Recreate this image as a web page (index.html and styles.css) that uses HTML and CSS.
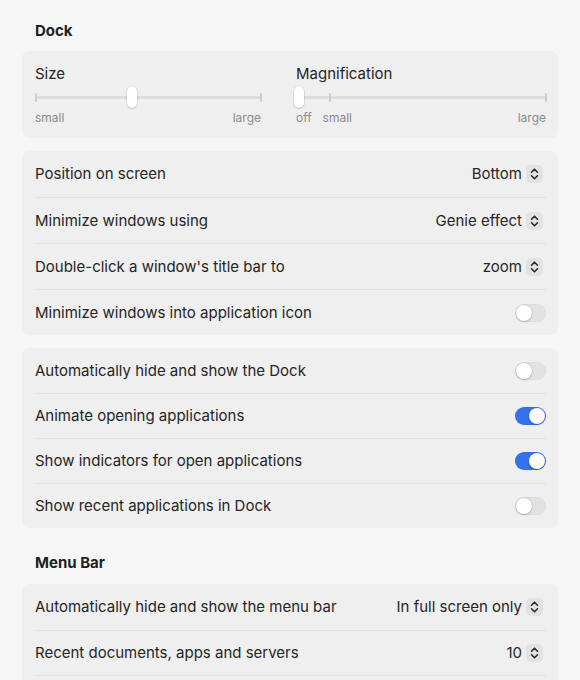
FILE: index.html
```html
<!DOCTYPE html>
<html lang="en">
<head>
<meta charset="utf-8">
<title>Desktop &amp; Dock</title>
<link rel="stylesheet" href="styles.css">
</head>
<body>
<div class="pane">
  <h2 class="section-title">Dock</h2>

  <div class="card sliders">
    <div class="slider-group size-group">
      <div class="slider-label">Size</div>
      <div class="slider">
        <div class="track"></div>
        <span class="tick" style="left:0%"></span>
        <span class="tick" style="left:100%"></span>
        <span class="thumb" style="left:43%"></span>
      </div>
      <div class="scale">
        <span>small</span>
        <span class="push">large</span>
      </div>
    </div>
    <div class="slider-group mag-group">
      <div class="slider-label">Magnification</div>
      <div class="slider">
        <div class="track"></div>
        <span class="tick" style="left:0%"></span>
        <span class="tick" style="left:13.6%"></span>
        <span class="tick" style="left:100%"></span>
        <span class="thumb" style="left:1%"></span>
      </div>
      <div class="scale">
        <span>off</span>
        <span class="gap-small">small</span>
        <span class="push">large</span>
      </div>
    </div>
  </div>

  <div class="card list tall">
    <div class="row">
      <span class="row-label">Position on screen</span>
      <span class="popup">Bottom<span class="stepper"><svg viewBox="0 0 17 18" width="17" height="18"><path d="M5.5 7.2 8.5 4.2 11.5 7.2M5.5 10.8 8.5 13.8 11.5 10.8"/></svg></span></span>
    </div>
    <div class="row">
      <span class="row-label">Minimize windows using</span>
      <span class="popup">Genie effect<span class="stepper"><svg viewBox="0 0 17 18" width="17" height="18"><path d="M5.5 7.2 8.5 4.2 11.5 7.2M5.5 10.8 8.5 13.8 11.5 10.8"/></svg></span></span>
    </div>
    <div class="row">
      <span class="row-label">Double-click a window's title bar to</span>
      <span class="popup">zoom<span class="stepper"><svg viewBox="0 0 17 18" width="17" height="18"><path d="M5.5 7.2 8.5 4.2 11.5 7.2M5.5 10.8 8.5 13.8 11.5 10.8"/></svg></span></span>
    </div>
    <div class="row">
      <span class="row-label">Minimize windows into application icon</span>
      <span class="toggle"></span>
    </div>
  </div>

  <div class="card list">
    <div class="row">
      <span class="row-label">Automatically hide and show the Dock</span>
      <span class="toggle"></span>
    </div>
    <div class="row">
      <span class="row-label">Animate opening applications</span>
      <span class="toggle on"></span>
    </div>
    <div class="row">
      <span class="row-label">Show indicators for open applications</span>
      <span class="toggle on"></span>
    </div>
    <div class="row">
      <span class="row-label">Show recent applications in Dock</span>
      <span class="toggle"></span>
    </div>
  </div>

  <h2 class="section-title spaced">Menu Bar</h2>

  <div class="card list tall continues">
    <div class="row">
      <span class="row-label">Automatically hide and show the menu bar</span>
      <span class="popup">In full screen only<span class="stepper"><svg viewBox="0 0 17 18" width="17" height="18"><path d="M5.5 7.2 8.5 4.2 11.5 7.2M5.5 10.8 8.5 13.8 11.5 10.8"/></svg></span></span>
    </div>
    <div class="row">
      <span class="row-label">Recent documents, apps and servers</span>
      <span class="popup">10<span class="stepper"><svg viewBox="0 0 17 18" width="17" height="18"><path d="M5.5 7.2 8.5 4.2 11.5 7.2M5.5 10.8 8.5 13.8 11.5 10.8"/></svg></span></span>
    </div>
  </div>
</div>
</body>
</html>
```

FILE: styles.css
```css
* {
  box-sizing: border-box;
}

html, body {
  margin: 0;
  padding: 0;
  background: #f6f6f6;
}

body {
  font-family: Inter, "Noto Sans", "Liberation Sans", sans-serif;
  color: #252525;
  font-size: 15px;
  -webkit-font-smoothing: antialiased;
}

.pane {
  padding: 21px 22px 0 22px;
}

.section-title {
  margin: 0 0 10px 0;
  padding-left: 13px;
  font-size: 15px;
  line-height: 20px;
  font-weight: 700;
  color: #1f1f1f;
}

.section-title.spaced {
  margin-top: 25px;
  margin-bottom: 11px;
}

.card {
  background: #efefef;
  border-radius: 7px;
}

.card + .card {
  margin-top: 13px;
}

/* Size / Magnification sliders */
.sliders {
  display: flex;
  gap: 35px;
  padding: 13px 12px 12px 13px;
}

.size-group {
  width: 226px;
}

.mag-group {
  flex: 1;
}

.slider-label {
  line-height: 20px;
}

.slider {
  position: relative;
  height: 22px;
  margin-top: 2px;
}

.track {
  position: absolute;
  left: 0;
  right: 0;
  top: 10px;
  height: 3px;
  border-radius: 2px;
  background: #dddddd;
}

.tick {
  position: absolute;
  top: 7px;
  width: 2px;
  height: 9px;
  margin-left: -1px;
  border-radius: 1px;
  background: #cdcdcd;
}

.tick:first-of-type {
  margin-left: 0;
}

.thumb {
  position: absolute;
  top: 0;
  width: 10px;
  height: 22px;
  margin-left: -5px;
  border-radius: 5px;
  background: #ffffff;
  box-shadow: 0 0 0 0.5px rgba(0, 0, 0, 0.12), 0 1px 2px rgba(0, 0, 0, 0.12);
}

.scale {
  display: flex;
  margin-top: 2px;
  font-size: 12px;
  line-height: 16px;
  color: #8a8a8a;
}

.scale .gap-small {
  margin-left: 11px;
}

.scale .push {
  margin-left: auto;
}

/* Rows */
.list {
  padding: 0 12px 0 13px;
}

.row {
  display: flex;
  align-items: center;
  justify-content: space-between;
  height: 45px;
}

.tall .row {
  height: 46px;
}

.row + .row {
  border-top: 1px solid #e1e1e1;
}

/* the menu bar list carries on below the window edge */
.continues {
  padding-bottom: 12px;
}

.continues .row:last-child {
  border-bottom: 1px solid #e1e1e1;
}

.row-label {
  line-height: 20px;
}

.popup {
  display: flex;
  align-items: center;
  gap: 4px;
  margin-right: 3px;
  line-height: 20px;
  color: #262626;
}

.stepper {
  display: block;
  width: 17px;
  height: 18px;
  border-radius: 5px;
  background: #e2e2e2;
}

.stepper svg {
  display: block;
  fill: none;
  stroke: #2a2a2a;
  stroke-width: 1.6;
  stroke-linecap: round;
  stroke-linejoin: round;
}

/* Switches */
.toggle {
  position: relative;
  width: 31px;
  height: 18px;
  border-radius: 9px;
  background: #e2e2e2;
  box-shadow: inset 0 0 0 0.5px rgba(0, 0, 0, 0.05);
}

.toggle::after {
  content: "";
  position: absolute;
  top: 1px;
  left: 1px;
  width: 16px;
  height: 16px;
  border-radius: 50%;
  background: #ffffff;
  box-shadow: 0 0 0 0.5px rgba(0, 0, 0, 0.12), 0 1px 2px rgba(0, 0, 0, 0.18);
}

.toggle.on {
  background: #3571ea;
}

.toggle.on::after {
  left: 14px;
}
```
